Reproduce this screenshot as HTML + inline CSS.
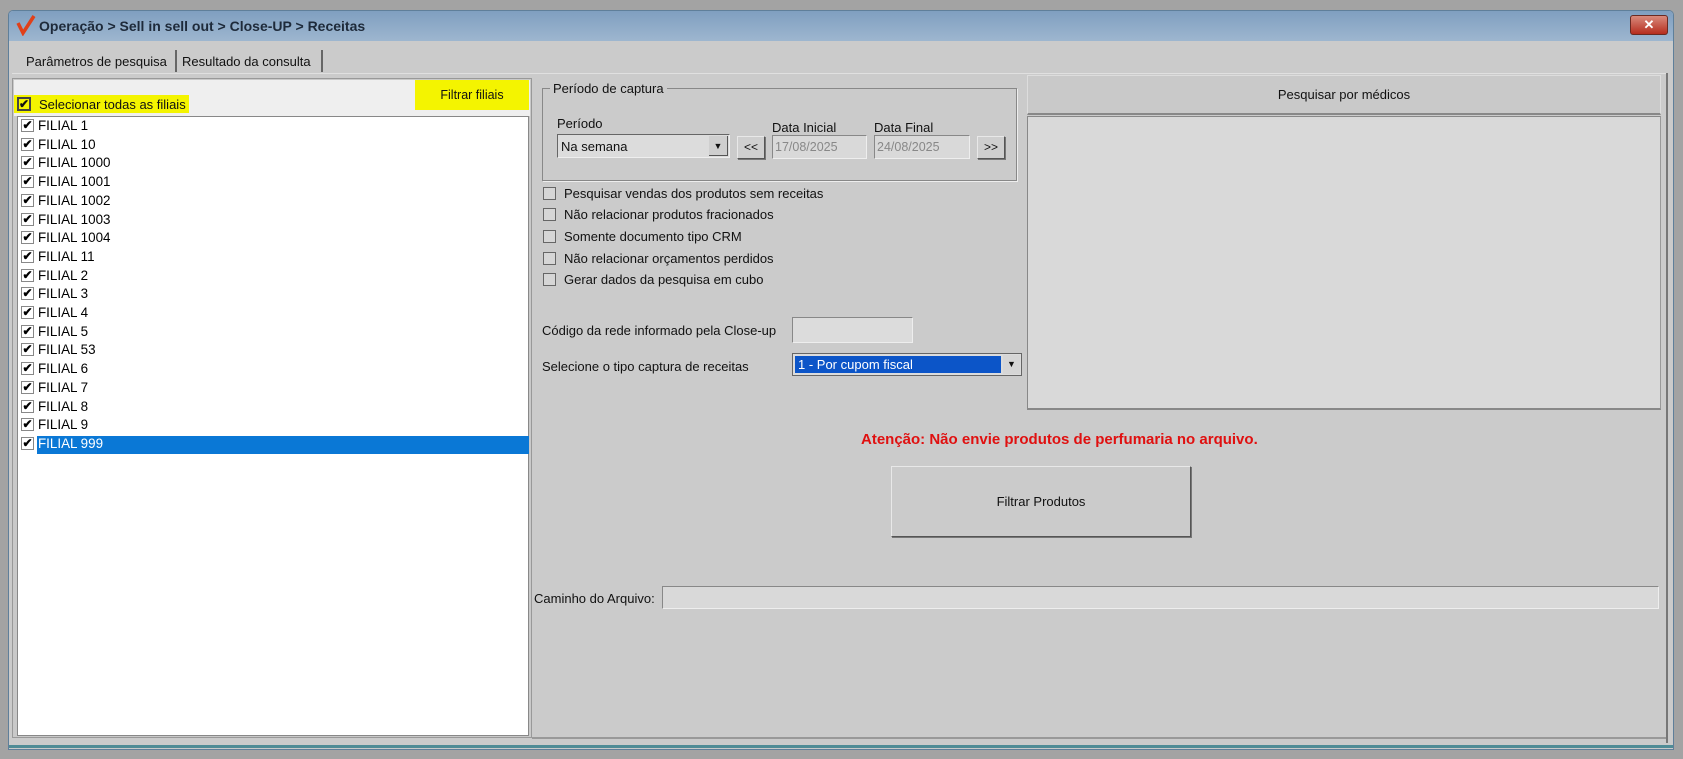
<!DOCTYPE html>
<html><head><meta charset="utf-8"><style>
*{margin:0;padding:0;box-sizing:border-box}
body{width:1683px;height:759px;background:#a3a3a3;font-family:"Liberation Sans",sans-serif;position:relative;overflow:hidden;color:#111}
.a{position:absolute}
.t{position:absolute;white-space:nowrap;font-size:13px;line-height:14px}
.cb{position:absolute;width:13px;height:13px;border:1px solid #777;background:#fff}
.ck{position:absolute;width:13px;height:13px;border:1px solid #888;background:#fff;font-size:12px;line-height:11px;text-align:center;font-weight:bold;color:#000}
.row{position:absolute;left:21px;height:18.7px;width:508px}
.row .ck{left:0;top:3px}
.row span{position:absolute;left:17px;top:1px;font-size:13.4px;line-height:17px;color:#000}
.btn{position:absolute;background:#cfcfcf;border:1px solid #e8e8e8;border-right-color:#555;border-bottom-color:#555;box-shadow:1px 1px 0 #777}
.inp{position:absolute;background:#d9d9d9;border:1px solid #888;border-right-color:#eee;border-bottom-color:#eee}
</style></head><body>
<div class="a" style="left:8px;top:10px;width:1666px;height:740px;background:#c9c9c9;border:1px solid #5f7f9a;border-radius:5px 5px 0 0"></div>
<div class="a" style="left:9px;top:11px;width:1664px;height:30px;background:linear-gradient(#7f9fc0,#9db6cf);border-radius:4px 4px 0 0"></div>
<svg class="a" style="left:15px;top:14px" width="22" height="22"><path d="M3 9 L8 19 L19 2" stroke="#e0401a" stroke-width="3.5" fill="none"/></svg>
<div class="t" style="left:39px;top:18px;font-size:14px;line-height:16px;font-weight:bold;color:#1e2a3a">Operação &gt; Sell in sell out &gt; Close-UP &gt; Receitas</div>
<div class="a" style="left:1630px;top:15px;width:38px;height:20px;background:linear-gradient(#d98a7c,#b62d1e);border:1px solid #6a2a22;border-radius:3px;color:#fff;font-size:13px;font-weight:bold;text-align:center;line-height:18px">✕</div>
<div class="a" style="left:9px;top:41px;width:1664px;height:707px;background:#cbcbcb"></div>
<div class="a" style="left:9px;top:745px;width:1664px;height:3px;background:#4f8c96"></div>
<div class="t" style="left:26px;top:55px">Parâmetros de pesquisa</div>
<div class="a" style="left:175px;top:50px;width:2px;height:22px;background:#666"></div>
<div class="t" style="left:182px;top:55px">Resultado da consulta</div>
<div class="a" style="left:321px;top:50px;width:2px;height:22px;background:#666"></div>
<div class="a" style="left:12px;top:73px;width:1655px;height:1px;background:#e0e0e0"></div>
<div class="a" style="left:12px;top:78px;width:520px;height:660px;border:1px solid #999;background:#c9c9c9"></div>
<div class="a" style="left:14px;top:80px;width:516px;height:36px;background:#efefef"></div>
<div class="a" style="left:415px;top:80px;width:114px;height:30px;background:#f4f400;font-size:12.5px;text-align:center;line-height:30px">Filtrar filiais</div>
<div class="a" style="left:14px;top:95px;width:175px;height:18px;background:#f4f400"></div>
<div class="a" style="left:17px;top:97px;width:14px;height:14px;border:2px solid #444;background:#f4f400;font-size:12px;font-weight:bold;line-height:10px;text-align:center">✔</div>
<div class="t" style="left:39px;top:97px;font-size:13px;line-height:16px">Selecionar todas as filiais</div>
<div class="a" style="left:17px;top:116px;width:512px;height:620px;background:#fff;border:1px solid #888"></div>
<div class="a" style="left:37px;top:436px;width:492px;height:18px;background:#0a78d6"></div>
<div class="row" style="top:116px"><div class="ck">✔</div><span>FILIAL 1</span></div>
<div class="row" style="top:134.7px"><div class="ck">✔</div><span>FILIAL 10</span></div>
<div class="row" style="top:153.4px"><div class="ck">✔</div><span>FILIAL 1000</span></div>
<div class="row" style="top:172.1px"><div class="ck">✔</div><span>FILIAL 1001</span></div>
<div class="row" style="top:190.8px"><div class="ck">✔</div><span>FILIAL 1002</span></div>
<div class="row" style="top:209.5px"><div class="ck">✔</div><span>FILIAL 1003</span></div>
<div class="row" style="top:228.2px"><div class="ck">✔</div><span>FILIAL 1004</span></div>
<div class="row" style="top:246.9px"><div class="ck">✔</div><span>FILIAL 11</span></div>
<div class="row" style="top:265.6px"><div class="ck">✔</div><span>FILIAL 2</span></div>
<div class="row" style="top:284.3px"><div class="ck">✔</div><span>FILIAL 3</span></div>
<div class="row" style="top:303px"><div class="ck">✔</div><span>FILIAL 4</span></div>
<div class="row" style="top:321.7px"><div class="ck">✔</div><span>FILIAL 5</span></div>
<div class="row" style="top:340.4px"><div class="ck">✔</div><span>FILIAL 53</span></div>
<div class="row" style="top:359.1px"><div class="ck">✔</div><span>FILIAL 6</span></div>
<div class="row" style="top:377.8px"><div class="ck">✔</div><span>FILIAL 7</span></div>
<div class="row" style="top:396.5px"><div class="ck">✔</div><span>FILIAL 8</span></div>
<div class="row" style="top:415.2px"><div class="ck">✔</div><span>FILIAL 9</span></div>
<div class="row" style="top:433.9px"><div class="ck">✔</div><span style="color:#fff">FILIAL 999</span></div>
<div class="a" style="left:542px;top:88px;width:475px;height:93px;border:1px solid #888;box-shadow:1px 1px 0 #eee"></div>
<div class="t" style="left:550px;top:82px;background:#cbcbcb;padding:0 3px">Período de captura</div>
<div class="t" style="left:557px;top:117px">Período</div>
<div class="a" style="left:557px;top:134px;width:173px;height:24px;background:#dcdcdc;border:1px solid #666;border-right-color:#eee;border-bottom-color:#eee"></div>
<div class="t" style="left:561px;top:140px">Na semana</div>
<div class="a" style="left:709px;top:136px;width:19px;height:20px;background:#cfcfcf;border-right:1px solid #555;border-bottom:1px solid #555;font-size:9px;text-align:center;line-height:20px">▼</div>
<div class="btn" style="left:737px;top:136px;width:28px;height:23px;font-size:12px;text-align:center;line-height:21px">&lt;&lt;</div>
<div class="t" style="left:772px;top:121px">Data Inicial</div>
<div class="inp" style="left:772px;top:135px;width:95px;height:24px;color:#888;font-size:12.5px;padding:4px 2px">17/08/2025</div>
<div class="t" style="left:874px;top:121px">Data Final</div>
<div class="inp" style="left:874px;top:135px;width:96px;height:24px;color:#888;font-size:12.5px;padding:4px 2px">24/08/2025</div>
<div class="btn" style="left:977px;top:136px;width:28px;height:23px;font-size:12px;text-align:center;line-height:21px">&gt;&gt;</div>
<div class="cb" style="left:543px;top:187px;background:#d6d6d6;border-color:#666"></div><div class="t" style="left:564px;top:187px">Pesquisar vendas dos produtos sem receitas</div>
<div class="cb" style="left:543px;top:208px;background:#d6d6d6;border-color:#666"></div><div class="t" style="left:564px;top:208px">Não relacionar produtos fracionados</div>
<div class="cb" style="left:543px;top:230px;background:#d6d6d6;border-color:#666"></div><div class="t" style="left:564px;top:230px">Somente documento tipo CRM</div>
<div class="cb" style="left:543px;top:252px;background:#d6d6d6;border-color:#666"></div><div class="t" style="left:564px;top:252px">Não relacionar orçamentos perdidos</div>
<div class="cb" style="left:543px;top:273px;background:#d6d6d6;border-color:#666"></div><div class="t" style="left:564px;top:273px">Gerar dados da pesquisa em cubo</div>
<div class="t" style="left:542px;top:324px">Código da rede informado pela Close-up</div>
<div class="inp" style="left:792px;top:317px;width:121px;height:26px;background:#dcdcdc"></div>
<div class="t" style="left:542px;top:360px">Selecione o tipo captura de receitas</div>
<div class="a" style="left:792px;top:353px;width:230px;height:23px;background:#dcdcdc;border:1px solid #666"></div>
<div class="a" style="left:795px;top:356px;width:206px;height:17px;background:#0c55c8"></div>
<div class="t" style="left:798px;top:358px;color:#fff">1 - Por cupom fiscal</div>
<div class="a" style="left:1003px;top:355px;width:17px;height:19px;background:#d6d6d6;font-size:9px;text-align:center;line-height:19px">▼</div>
<div class="a" style="left:1027px;top:75px;width:634px;height:40px;background:#c9c9c9;border:1px solid #ddd;border-bottom:2px solid #888;font-size:13px;text-align:center;line-height:38px">Pesquisar por médicos</div>
<div class="a" style="left:1027px;top:116px;width:634px;height:294px;background:#d9d9d9;border:1px solid #888;border-right-color:#999;border-bottom:2px solid #888"></div>
<div class="a" style="left:1666px;top:73px;width:2px;height:670px;background:#777"></div>
<div class="t" style="left:861px;top:432px;font-size:15px;line-height:16px;font-weight:bold;color:#e01010">Atenção: Não envie produtos de perfumaria no arquivo.</div>
<div class="btn" style="left:891px;top:466px;width:300px;height:71px;background:#cbcbcb;font-size:13px;text-align:center;line-height:69px">Filtrar Produtos</div>
<div class="t" style="left:534px;top:592px">Caminho do Arquivo:</div>
<div class="inp" style="left:662px;top:586px;width:997px;height:23px;border-color:#888 #eee #eee #888"></div>
<div class="a" style="left:532px;top:737px;width:1134px;height:2px;background:#999"></div>
</body></html>
